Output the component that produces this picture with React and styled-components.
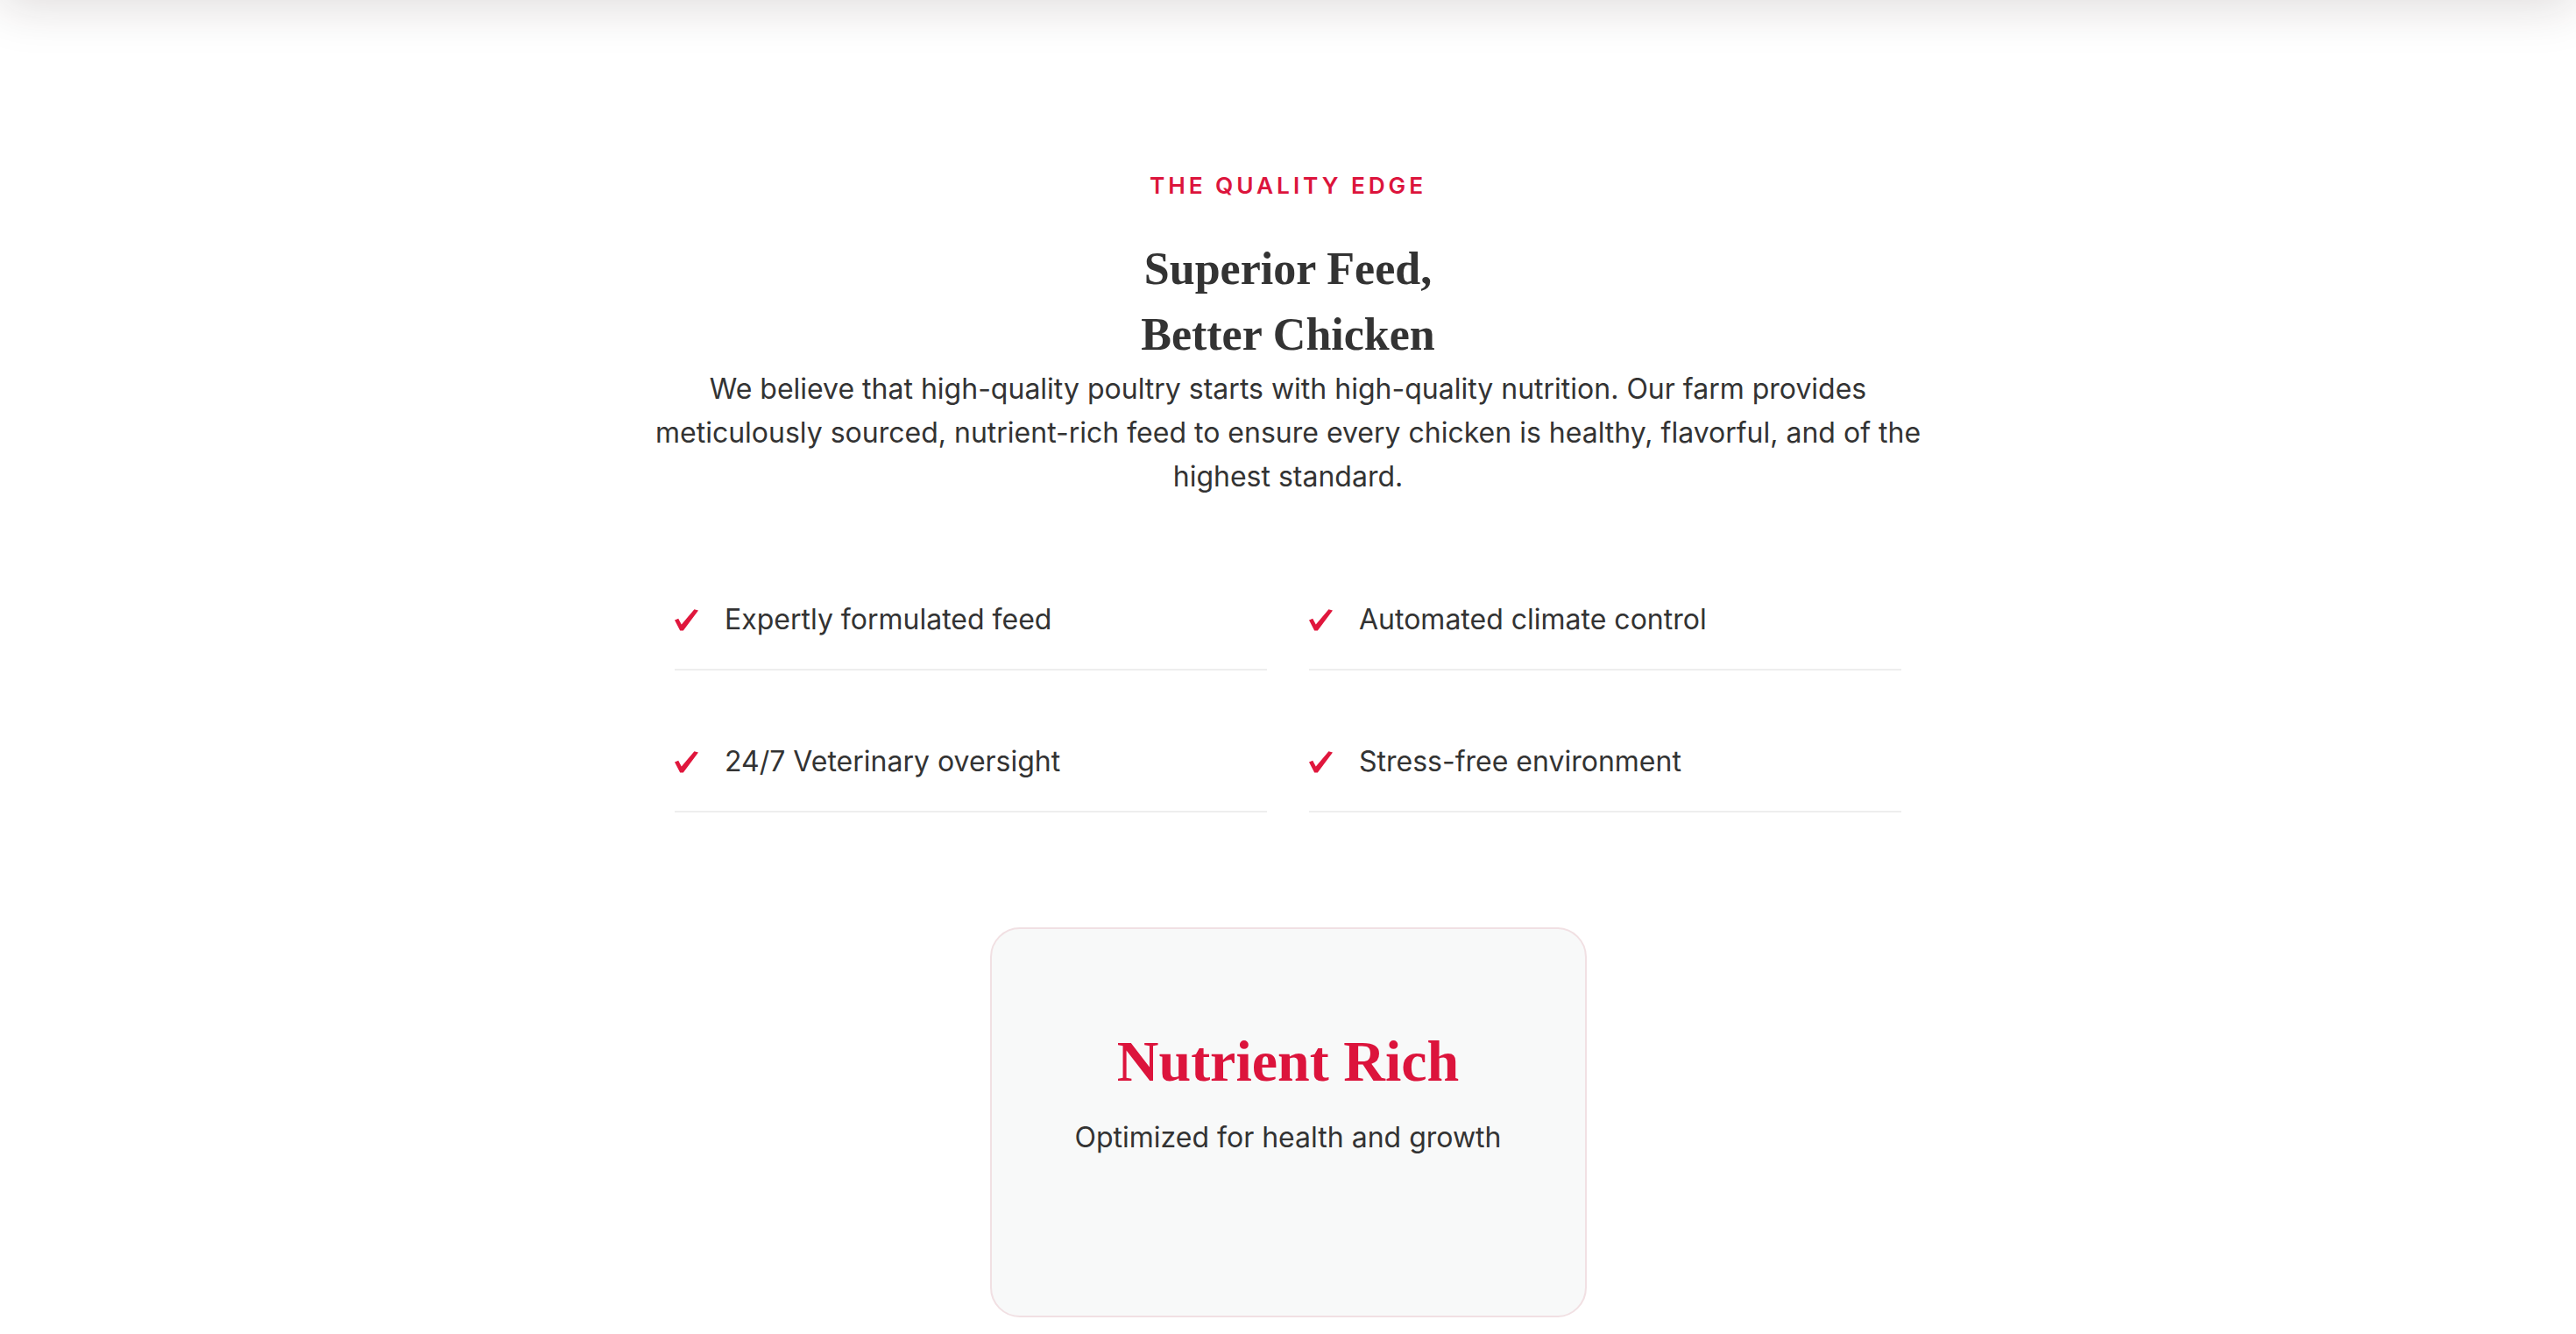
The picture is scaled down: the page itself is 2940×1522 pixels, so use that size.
import styled, { createGlobalStyle } from "styled-components";

const GlobalStyle = createGlobalStyle`
  * {
    box-sizing: border-box;
  }

  body {
    margin: 0;
    background: #fff;
    font-family: Inter, "Liberation Sans", sans-serif;
    color: #333;
  }
`;

const features = [
  "Expertly formulated feed",
  "Automated climate control",
  "24/7 Veterinary oversight",
  "Stress-free environment",
];

const CheckIcon = () => (
  <svg width="27" height="25" viewBox="0 0 27 25" aria-hidden="true">
    <path
      d="M0 12.6 L4.2 10.8 L7.8 17.4 L22.4 0.2 L27 1.6 L9.8 24.6 L6.2 24.6 Z"
      fill="currentColor"
    />
  </svg>
);

const App = () => {
  return (
    <>
      <GlobalStyle />
      <TopShade />
      <Section>
        <Eyebrow>The Quality Edge</Eyebrow>
        <Heading>
          Superior Feed,
          <br />
          Better Chicken
        </Heading>
        <Lead>
          We believe that high-quality poultry starts with high-quality
          nutrition. Our farm provides meticulously sourced, nutrient-rich feed
          to ensure every chicken is healthy, flavorful, and of the highest
          standard.
        </Lead>

        <FeatureGrid>
          {features.map((item) => (
            <FeatureItem key={item}>
              <Check>
                <CheckIcon />
              </Check>
              <FeatureText>{item}</FeatureText>
            </FeatureItem>
          ))}
        </FeatureGrid>

        <StatCard>
          <StatTitle>Nutrient Rich</StatTitle>
          <StatText>Optimized for health and growth</StatText>
        </StatCard>
      </Section>
    </>
  );
};

export default App;

/**
 *
 * STYLED COMPONENTS
 *
 **/
const TopShade = styled.div`
  height: 80px;
  margin-top: -80px;
  background: #fff;
  box-shadow: 0 8px 56px rgba(40, 20, 20, 0.15);
`;

const Section = styled.section`
  display: flex;
  flex-direction: column;
  align-items: center;
  padding: 192px 40px 40px;
  text-align: center;
`;

const Eyebrow = styled.p`
  margin: 0;
  font-size: 26.25px;
  line-height: 1.5;
  font-weight: 600;
  letter-spacing: 0.15em;
  text-transform: uppercase;
  color: #dc143c;
`;

const Heading = styled.h2`
  margin: 38px 0 0;
  font-family: "Liberation Serif", "DejaVu Serif", serif;
  font-size: 52px;
  line-height: 75px;
  font-weight: 700;
  color: #333;
`;

const Lead = styled.p`
  max-width: 1500px;
  margin: 0;
  font-size: 32px;
  line-height: 50px;
  color: #333;
`;

const FeatureGrid = styled.div`
  display: grid;
  grid-template-columns: repeat(2, 1fr);
  column-gap: 48px;
  row-gap: 48px;
  width: 100%;
  max-width: 1400px;
  margin-top: 82px;
`;

const FeatureItem = styled.div`
  display: flex;
  align-items: center;
  gap: 30px;
  padding: 32px 0;
  border-bottom: 2px solid #eeeeee;
  text-align: left;
`;

const Check = styled.span`
  display: flex;
  align-items: center;
  width: 27px;
  height: 48px;
  color: #e0173d;
`;

const FeatureText = styled.span`
  font-size: 32px;
  line-height: 48px;
  color: #333;
`;

const StatCard = styled.div`
  display: flex;
  flex-direction: column;
  align-items: center;
  width: 681px;
  height: 445px;
  margin-top: 131px;
  padding-top: 111px;
  background: #f8f9f9;
  border: 2px solid #f1e0e3;
  border-radius: 34px;
`;

const StatTitle = styled.h3`
  margin: 0;
  font-family: "Liberation Serif", "DejaVu Serif", serif;
  font-size: 66px;
  line-height: 1.2;
  font-weight: 700;
  color: #dc143c;
`;

const StatText = styled.p`
  margin: 23px 0 0;
  font-size: 32px;
  line-height: 1.5;
  color: #333;
`;
